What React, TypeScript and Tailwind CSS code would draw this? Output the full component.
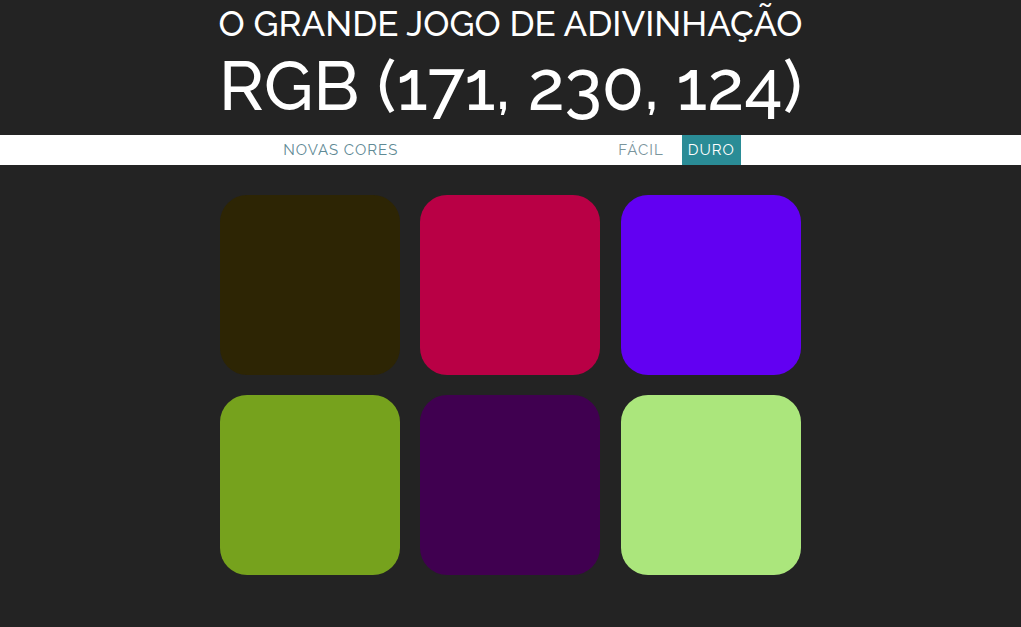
import React from 'react'

const colors = ['#2d2504', '#b90045', '#6200f2', '#76a21d', '#400050', '#abe67c']

export default function App() {
  return (
    <div className="min-h-screen bg-[#232323] font-['Raleway','Lato',sans-serif]">
      {/* Header */}
      <h1 className="h-[135px] text-center text-white font-medium uppercase">
        <span className="block pt-[2px] text-[35px] leading-[44px]">O grande jogo de adivinhação</span>
        <span className="block text-[69px] leading-[80px]">RGB (171, 230, 124)</span>
      </h1>

      {/* Stripe */}
      <div className="flex h-[30px] items-stretch justify-center bg-white pr-[5px] text-[15px] uppercase tracking-[1px]">
        <button className="px-2 uppercase text-[#5f8a95]">Novas cores</button>
        <span className="w-[204px]"></span>
        <button className="px-2 uppercase text-[#7a959c]">Fácil</button>
        <button className="ml-[10px] bg-[#2a8c96] px-[6px] uppercase text-white">Duro</button>
      </div>

      {/* Squares */}
      <div className="mx-auto mt-[30px] grid w-[582px] grid-cols-3 gap-5">
        {colors.map((c) => (
          <div key={c} className="h-[180px] w-[180px] rounded-[15%]" style={{ backgroundColor: c }}></div>
        ))}
      </div>
    </div>
  )
}
